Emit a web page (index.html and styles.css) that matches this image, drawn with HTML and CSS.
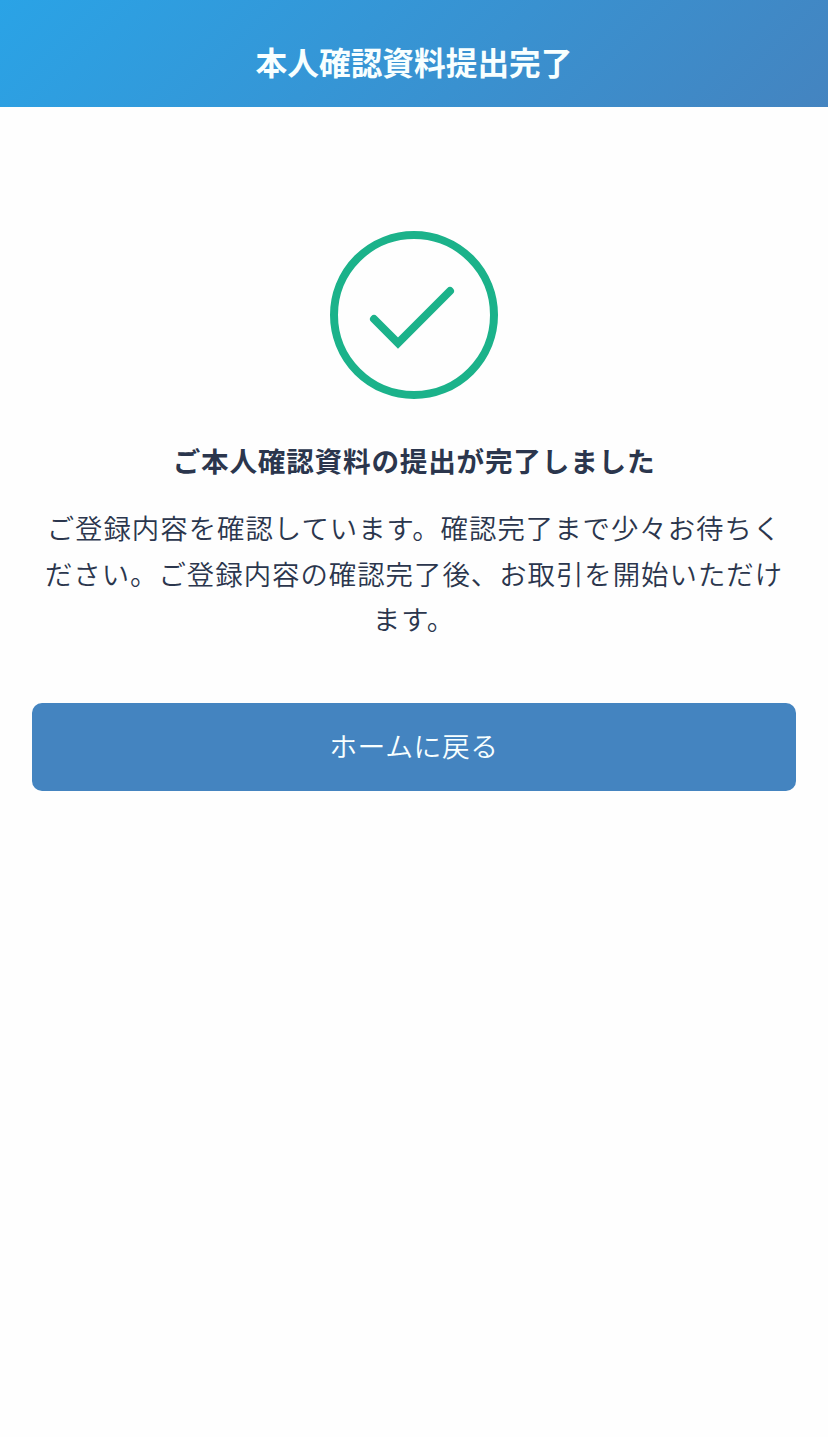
FILE: index.html
```html
<!DOCTYPE html>
<html lang="ja">

<head>
    <meta charset="utf-8">
    <meta name="viewport" content="width=device-width, initial-scale=1.0">
    <title>本人確認資料提出完了</title>
    <link rel="stylesheet" href="styles.css">
</head>

<body>
    <header class="header">
        <h1>本人確認資料提出完了</h1>
    </header>

    <main class="complete">
        <svg class="check" viewBox="0 0 168 168" fill="none">
            <circle cx="84" cy="84" r="80" />
            <path d="M44 88 L68 112 L120 60" />
        </svg>
        <h2>ご本人確認資料の提出が完了しました</h2>
        <p>ご登録内容を確認しています。確認完了まで少々お待ちく<br>ださい。ご登録内容の確認完了後、お取引を開始いただけ<br>ます。</p>
        <button class="home">ホームに戻る</button>
    </main>
</body>

</html>
```
FILE: styles.css
```css
html,
body,
* {
    margin: 0;
    padding: 0;
    box-sizing: border-box;
}

body {
    min-height: 100vh;
    background-color: #fefefe;
    color: #2b364d;
    font-family: "Noto Sans CJK JP", sans-serif;
}

.header {
    height: 107px;
    padding-top: 37px;
    background-image: linear-gradient(135deg, #2aa3e6, #4484c0);
    text-align: center;
}

h1 {
    color: #f8ffff;
    font-size: 31.7px;
    font-weight: 700;
    line-height: 48px;
}

.complete {
    display: flex;
    flex-direction: column;
    align-items: center;
    padding: 124px 32px 0;
}

.check {
    width: 168px;
    height: 168px;
    stroke: #1bb28a;
    stroke-width: 8;
}

.check path {
    stroke-linecap: round;
}

h2 {
    margin-top: 39px;
    font-size: 27.6px;
    font-weight: 700;
    line-height: 44px;
    letter-spacing: 0.8px;
}

p {
    margin-top: 23px;
    font-size: 27.4px;
    font-weight: 350;
    line-height: 45.6px;
    letter-spacing: 1px;
    text-align: center;
    white-space: nowrap;
}

.home {
    width: 100%;
    height: 88px;
    margin-top: 61.2px;
    padding-bottom: 3px;
    border: none;
    border-radius: 10px;
    background-color: #4484c0;
    color: #f8ffff;
    font-family: inherit;
    font-size: 27.8px;
    font-weight: 350;
    letter-spacing: 0.6px;
}
```
